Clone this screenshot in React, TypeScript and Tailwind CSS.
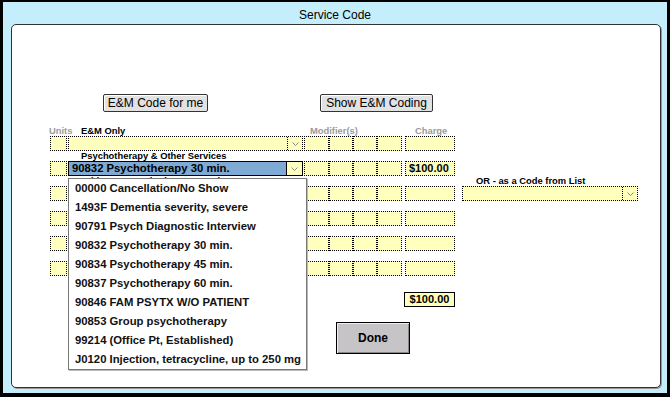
import React from 'react';

const CODES = [
  '00000 Cancellation/No Show',
  '1493F Dementia severity, severe',
  '90791 Psych Diagnostic Interview',
  '90832 Psychotherapy 30 min.',
  '90834 Psychotherapy 45 min.',
  '90837 Psychotherapy 60 min.',
  '90846 FAM PSYTX W/O PATIENT',
  '90853 Group psychotherapy',
  '99214 (Office Pt, Established)',
  'J0120 Injection, tetracycline, up to 250 mg',
];

const Chevron = () => (
  <svg width="7" height="4" viewBox="0 0 7 4">
    <polyline points="0.5,0.5 3.5,3.5 6.5,0.5" fill="none" stroke="#8a8a8a" strokeWidth="1" />
  </svg>
);

const dotted = 'border border-dotted border-black bg-[#ffffbe]';

const Row: React.FC<{ label?: React.ReactNode; right?: React.ReactNode; active?: boolean; charge?: string; rightSelect?: boolean }> = ({
  label,
  right,
  active,
  charge,
  rightSelect,
}) => (
  <div className="flex flex-col">
    {/* label line */}
    <div className="flex h-[10px] items-end text-[9.4px] leading-[10px] font-bold whitespace-nowrap">
      <div className="w-[17px] mr-px">{label === 'first' ? <span className="-ml-px text-[#9a9a9a]">Units</span> : null}</div>
      <div className="w-[235px] pl-[13px] text-black">{label === 'first' ? 'E&M Only' : label}</div>
      <div className="w-[99px] ml-px pl-[6px] text-[#9a9a9a]">{label === 'first' ? 'Modifier(s)' : ''}</div>
      <div className="w-[50px] ml-[2px] pl-[10px] text-[#9a9a9a]">{label === 'first' ? 'Charge' : ''}</div>
      <div className="w-[176px] ml-[7px] pl-[14px] text-black">{right}</div>
    </div>
    {/* field line */}
    <div className="flex h-[15px]">
      <div className={`w-[17px] mr-px ${dotted}`} />
      {active ? (
        <div className="w-[235px] flex border border-black bg-[#7eaad3]">
          <div className="flex-1 pl-[3px] text-[11.3px] leading-[13px] font-bold text-black whitespace-nowrap">
            90832 Psychotherapy 30 min.
          </div>
          <div className="w-[16px] border-l border-black bg-[#ffffbe] flex items-center justify-center">
            <Chevron />
          </div>
        </div>
      ) : (
        <div className={`w-[235px] flex ${dotted}`}>
          <div className="flex-1" />
          <div className="w-[15px] border-l border-dotted border-black flex items-center justify-center">
            <Chevron />
          </div>
        </div>
      )}
      <div className="flex ml-px">
        <div className={`w-[25px] ${dotted}`} />
        <div className={`w-[24px] ${dotted}`} />
        <div className={`w-[24px] ${dotted}`} />
        <div className={`w-[25px] ${dotted}`} />
      </div>
      <div className={`w-[50px] ml-[3px] ${dotted} text-[11px] leading-[13px] font-bold text-black pl-[3px]`}>{charge}</div>
      {rightSelect && (
        <div className={`w-[176px] ml-[7px] flex ${dotted}`}>
          <div className="flex-1" />
          <div className="w-[15px] border-l border-dotted border-black flex items-center justify-center">
            <Chevron />
          </div>
        </div>
      )}
    </div>
  </div>
);

const App: React.FC = () => {
  return (
    <div className="w-[670px] h-[397px] bg-[#c4eefc] border-black border-l-[3px] border-t-2 border-r-[3px] border-b-[4px] flex flex-col font-['Liberation_Sans',Arial,sans-serif] text-black overflow-hidden">
      <div className="h-[22px] pt-[4px] text-center text-[12px] leading-[18px]">Service Code</div>

      <div className="flex-1 ml-[8px] mr-[6px] mb-[5px] relative bg-white rounded-[5px] border border-[#333] shadow-[1px_1px_0_#999] flex flex-col">
        {/* top buttons */}
        <div className="flex pl-[91px] mt-[69px]">
          <button className="w-[105px] h-[18px] bg-[#e2e2e2] border border-[#333] rounded-[2px] text-[12px] leading-[16px] shadow-[inset_1px_1px_0_#fff]">
            E&amp;M Code for me
          </button>
          <button className="w-[113px] h-[18px] ml-[112px] bg-[#e2e2e2] border border-[#333] rounded-[2px] text-[12px] leading-[16px] shadow-[inset_1px_1px_0_#fff]">
            Show E&amp;M Coding
          </button>
        </div>

        {/* code rows */}
        <div className="flex flex-col pl-[38px] mt-[14px]">
          <Row label="first" />
          <Row label="Psychotherapy & Other Services" active charge="$100.00" />
          <Row label="Add-on to Psychotherapy & Other Svcs" right="OR - as a Code from List" rightSelect />
          <Row />
          <Row />
          <Row />
        </div>

        {/* total */}
        <div className="flex pl-[392px] mt-[16px]">
          <div className="w-[51px] h-[15px] border border-black bg-[#ffffbe] text-[11px] leading-[13px] font-bold text-center">
            $100.00
          </div>
        </div>

        {/* done */}
        <div className="flex pl-[324px] mt-[15px]">
          <button className="w-[74px] h-[32px] bg-[#c6c4c6] border border-black shadow-[inset_1px_1px_0_#eee,inset_-1px_-1px_0_#888] text-[12px] font-bold">
            Done
          </button>
        </div>

        {/* open dropdown list */}
        <div className="absolute left-[56px] top-[153px] w-[239px] bg-white border border-[#777] shadow-[1px_1px_0_#bbb]">
          {CODES.map((c) => (
            <div key={c} className="h-[19px] pl-[6px] text-[11.3px] leading-[19px] font-bold text-[#111] whitespace-nowrap">
              {c}
            </div>
          ))}
        </div>
      </div>
    </div>
  );
};

export default App;
